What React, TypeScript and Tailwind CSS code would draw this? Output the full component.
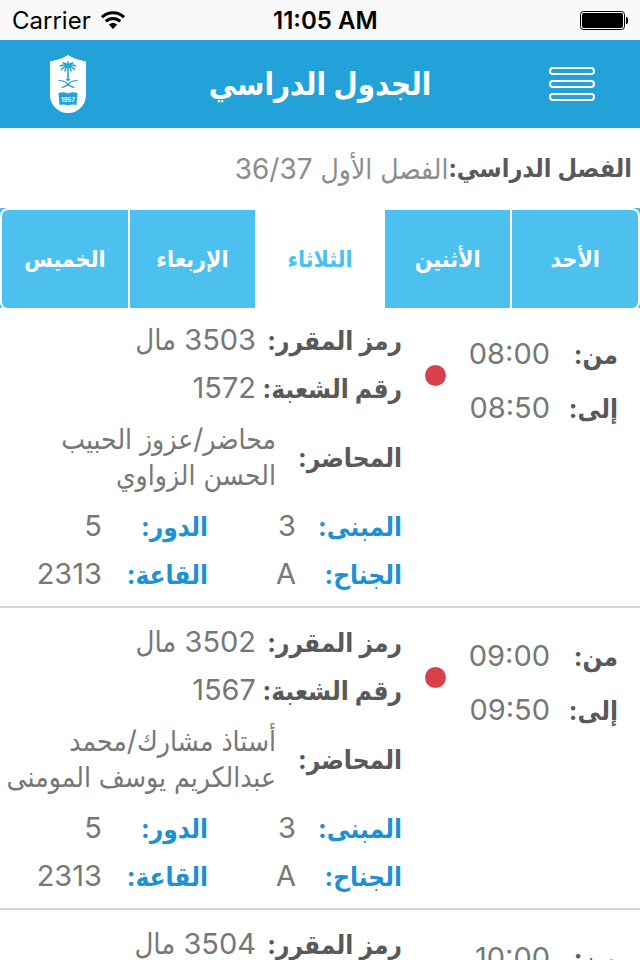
import { useState } from "react";

type Lecture = {
  from: string;
  to?: string;
  code: string;
  section?: string;
  lecturer?: string[];
  building?: string;
  floor?: string;
  wing?: string;
  room?: string;
};

const days = ["الأحد", "الأثنين", "الثلاثاء", "الإربعاء", "الخميس"];

const lectures: Lecture[] = [
  {
    from: "08:00",
    to: "08:50",
    code: "3503 مال",
    section: "1572",
    lecturer: ["محاضر/عزوز الحبيب", "الحسن الزواوي"],
    building: "3",
    floor: "5",
    wing: "A",
    room: "2313",
  },
  {
    from: "09:00",
    to: "09:50",
    code: "3502 مال",
    section: "1567",
    lecturer: ["أستاذ مشارك/محمد", "عبدالكريم يوسف المومنى"],
    building: "3",
    floor: "5",
    wing: "A",
    room: "2313",
  },
  { from: "10:00", code: "3504 مال" },
];

function StatusBar() {
  return (
    <div dir="ltr" className="flex h-10 shrink-0 items-center justify-between bg-[#f9f9f9] px-3 pt-0.5 text-black">
      <div className="flex items-center gap-2.5 text-2xl">
        <span>Carrier</span>
        <svg width="24" height="20" viewBox="0 0 24 20" fill="none" stroke="#000" strokeWidth="3">
          <path d="M1 6.200C7 .2 17 .2 23 6.200" />
          <path d="M4.800 10.400c4-4 10.400-4 14.400 0" />
          <path d="M12 18l-4.200-4.400c2.400-2.200 6-2.200 8.400 0z" fill="#000" stroke="none" />
        </svg>
      </div>
      <div className="pr-16 pl-2.5 text-2xl font-semibold whitespace-nowrap">11:05 AM</div>
      <svg width="48" height="20" viewBox="0 0 48 20">
        <rect x="0.5" y="0.5" width="44" height="18" rx="3" fill="none" stroke="#000" />
        <rect x="2" y="2" width="41" height="15" rx="2" fill="#000" />
        <path d="M46 6h.5q2 1 2 3.500t-2 3.500H46z" fill="#000" />
      </svg>
    </div>
  );
}

function Crest() {
  return (
    <svg width="36" height="58" viewBox="0 0 36 58" role="img" aria-label="1957">
      <path d="M0 6.500Q11 4.500 18 0q7 4.500 18 6.500V40a18 18 0 0 1-36 0z" fill="#fff" />
      <g fill="none" stroke="#22a2d8" strokeLinecap="round">
        <path d="M18 11v14" strokeWidth="1.600" />
        <path
          d="M18 11q-4-2-7.500 0M18 11q4-2 7.500 0M18 11q-4 0-6.500 3.500M18 11q4 0 6.500 3.500M18 11q-2.500 1-3 5M18 11q2.500 1 3 5M18 11q-2-3-5-3M18 11q2-3 5-3M18 11V7"
          strokeWidth="1.500"
        />
        <path d="M9 25.500q5 0 8 3t7 4M27 25.500q-5 0-8 3t-7 4" strokeWidth="1.200" />
        <path d="M16.500 24.800h3" strokeWidth="1.400" />
      </g>
      <path d="M8.500 38q5-1.500 9.500.5 4.500-2 9.500-.5l-1 12q-4-1-8.500.5-4.500-1.500-8.500-.5z" fill="#22a2d8" />
      <text x="18" y="46.500" textAnchor="middle" fontSize="6" fontWeight="700" fill="#fff">
        1957
      </text>
    </svg>
  );
}

function Header() {
  return (
    <header className="flex h-22 shrink-0 items-center justify-between bg-[#22a2d8] px-11 text-white">
      <button type="button" aria-label="القائمة">
        <svg width="48" height="36" viewBox="0 0 48 36" fill="none" stroke="#fff" strokeWidth="2">
          <rect x="2" y="2" width="44" height="6" rx="3" />
          <rect x="2" y="15" width="44" height="6" rx="3" />
          <rect x="2" y="28" width="44" height="6" rx="3" />
        </svg>
      </button>
      <h1 className="text-[31px] font-bold">الجدول الدراسي</h1>
      <div className="flex w-12 justify-center">
        <Crest />
      </div>
    </header>
  );
}

function DayTabs() {
  const [selected, setSelected] = useState(2);
  return (
    <nav className="h-25 shrink-0 overflow-hidden bg-[#4cc1f0]">
      <div className="grid h-[102px] grid-cols-5 gap-0.5 overflow-hidden rounded-lg border-2 border-white bg-white">
        {days.map((day, i) => (
          <button
            key={day}
            type="button"
            aria-pressed={i === selected}
            onClick={() => setSelected(i)}
            className={
              i === selected
                ? "bg-white text-[23px] font-bold text-[#4cc1f0]"
                : "bg-[#4cc1f0] text-[23px] font-bold text-white"
            }
          >
            {day}
          </button>
        ))}
      </div>
    </nav>
  );
}

function LectureRow({ item }: { item: Lecture }) {
  return (
    <li className="flex border-b-2 border-[#d3d3d3] pt-2.5 pb-2 text-[29px] whitespace-nowrap text-[#777]">
      <dl className="w-[172px] shrink-0 pt-[11px] pr-[22px]">
        <div className="flex h-[54px] items-center">
          <dt className="w-[68px] shrink-0 text-[26px] font-bold text-[#595959]">من:</dt>
          <dd>{item.from}</dd>
        </div>
        {item.to && (
          <div className="flex h-[54px] items-center">
            <dt className="w-[68px] shrink-0 text-[26px] font-bold text-[#595959]">إلى:</dt>
            <dd>{item.to}</dd>
          </div>
        )}
      </dl>
      <span className="mt-[49px] mr-[22px] ml-[23px] size-[21px] shrink-0 rounded-full bg-[#d9414a]" />
      <dl className="flex-1">
        <div className="flex h-12 items-center">
          <dt className="w-[146px] shrink-0 text-[26px] font-bold text-[#595959]">رمز المقرر:</dt>
          <dd>{item.code}</dd>
        </div>
        {item.section && (
          <div className="flex h-12 items-center">
            <dt className="w-[146px] shrink-0 text-[26px] font-bold text-[#595959]">رقم الشعبة:</dt>
            <dd>{item.section}</dd>
          </div>
        )}
        {item.lecturer && (
          <div className="flex h-[90px] items-center">
            <dt className="w-[126px] shrink-0 text-[26px] font-bold text-[#595959]">المحاضر:</dt>
            <dd className="text-[28px] leading-9">
              {item.lecturer.map((line) => (
                <span key={line} className="block">
                  {line}
                </span>
              ))}
            </dd>
          </div>
        )}
        {item.building && (
          <div className="flex h-12 items-center">
            <dt className="w-[106px] shrink-0 text-[26px] font-bold text-[#2090d0]">المبنى:</dt>
            <dd className="w-[88px] shrink-0">{item.building}</dd>
            <dt className="w-[106px] shrink-0 text-[26px] font-bold text-[#2090d0]">الدور:</dt>
            <dd>{item.floor}</dd>
          </div>
        )}
        {item.wing && (
          <div className="flex h-12 items-center">
            <dt className="w-[106px] shrink-0 text-[26px] font-bold text-[#2090d0]">الجناح:</dt>
            <dd className="w-[88px] shrink-0">{item.wing}</dd>
            <dt className="w-[106px] shrink-0 text-[26px] font-bold text-[#2090d0]">القاعة:</dt>
            <dd>{item.room}</dd>
          </div>
        )}
      </dl>
    </li>
  );
}

export default function App() {
  return (
    <div
      dir="rtl"
      lang="ar"
      className="flex h-screen flex-col overflow-hidden bg-white font-[Inter,'DejaVu_Sans_Condensed','DejaVu_Sans',sans-serif]"
    >
      <StatusBar />
      <Header />
      <p className="flex h-20 shrink-0 items-center px-2 pt-0.5 whitespace-nowrap">
        <span className="text-[25px] font-bold text-[#595959]">الفصل الدراسي:</span>
        <span className="text-[28px] text-[#8c8c8c]">الفصل الأول 36/37</span>
      </p>
      <DayTabs />
      <ul className="-mt-0.5 flex-1">
        {lectures.map((item) => (
          <LectureRow key={item.from} item={item} />
        ))}
      </ul>
    </div>
  );
}
